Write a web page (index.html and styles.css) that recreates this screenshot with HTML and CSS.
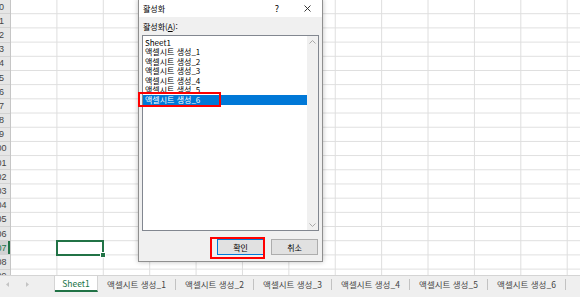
FILE: index.html
```html
<!DOCTYPE html>
<html lang="ko">
<head>
  <meta charset="UTF-8" />
  <title>활성화</title>
  <link rel="stylesheet" href="styles.css">
</head>
<body>

<div class="excel">
  <div class="sheet">
    <div class="rowhead">
      <div class="rh"><span>90</span></div>
      <div class="rh"><span>91</span></div>
      <div class="rh"><span>92</span></div>
      <div class="rh"><span>93</span></div>
      <div class="rh"><span>94</span></div>
      <div class="rh"><span>95</span></div>
      <div class="rh"><span>96</span></div>
      <div class="rh"><span>97</span></div>
      <div class="rh"><span>98</span></div>
      <div class="rh"><span>99</span></div>
      <div class="rh"><span>100</span></div>
      <div class="rh"><span>101</span></div>
      <div class="rh"><span>102</span></div>
      <div class="rh"><span>103</span></div>
      <div class="rh"><span>104</span></div>
      <div class="rh"><span>105</span></div>
      <div class="rh"><span>106</span></div>
      <div class="rh current"><span>107</span></div>
      <div class="rh"><span>108</span></div>
      <div class="rh"><span>109</span></div>
    </div>
    <div class="cells">
      <div class="active-cell"></div>
    </div>
  </div>

  <div class="tabbar">
    <div class="nav">
      <svg width="3" height="5" viewBox="0 0 3 5"><path d="M3 0 L0 2.5 L3 5 Z" fill="#c4c4c4"/></svg>
      <svg width="3" height="5" viewBox="0 0 3 5"><path d="M0 0 L3 2.5 L0 5 Z" fill="#c4c4c4"/></svg>
    </div>
    <div class="tab active">Sheet1</div>
    <div class="tab">액셀시트 생성_1</div>
    <div class="tab">액셀시트 생성_2</div>
    <div class="tab">액셀시트 생성_3</div>
    <div class="tab">액셀시트 생성_4</div>
    <div class="tab">액셀시트 생성_5</div>
    <div class="tab">액셀시트 생성_6</div>
  </div>
</div>

<div class="dialog">
  <div class="titlebar">
    <span class="title">활성화</span>
    <span class="tbtn">?</span>
    <span class="tbtn">
      <svg width="7" height="7" viewBox="0 0 7 7"><path d="M0.5 0.5 L6.5 6.5 M6.5 0.5 L0.5 6.5" stroke="#222" stroke-width="0.9" fill="none"/></svg>
    </span>
  </div>
  <div class="dlg-body">
    <div class="label">활성화(<u>A</u>):</div>
    <div class="listbox">
      <div class="items">
        <div class="item">Sheet1</div>
        <div class="item">액셀시트 생성_1</div>
        <div class="item">액셀시트 생성_2</div>
        <div class="item">액셀시트 생성_3</div>
        <div class="item">액셀시트 생성_4</div>
        <div class="item">액셀시트 생성_5</div>
        <div class="item selected">액셀시트 생성_6</div>
      </div>
      <div class="scrollbar">
        <svg width="7" height="4" viewBox="0 0 7 4"><path d="M0.5 3.5 L3.5 0.5 L6.5 3.5" stroke="#a8a8a8" fill="none"/></svg>
        <svg width="7" height="4" viewBox="0 0 7 4"><path d="M0.5 0.5 L3.5 3.5 L6.5 0.5" stroke="#a8a8a8" fill="none"/></svg>
      </div>
    </div>
    <div class="buttons">
      <button class="btn default">확인</button>
      <button class="btn">취소</button>
    </div>
  </div>
</div>

<div class="mark mark-list"></div>
<div class="mark mark-ok"></div>

</body>
</html>
```

FILE: styles.css
```css
body {
  margin: 0;
  width: 580px;
  height: 297px;
  overflow: hidden;
  position: relative;
  background: #fff;
  font-family: "Noto Sans CJK KR", "Noto Sans", sans-serif;
}

/* spreadsheet */
.excel {
  display: flex;
  flex-direction: column;
  height: 297px;
}
.sheet {
  display: flex;
  height: 275px;
  overflow: hidden;
}
.rowhead {
  width: 11px;
  flex: none;
  background: #e6e6e6;
  border-right: 1px solid #c6c6c6;
  box-sizing: border-box;
}
.rh {
  height: 14.2px;
  box-sizing: border-box;
  border-bottom: 1px solid #d2d2d2;
  display: flex;
  align-items: center;
  overflow: hidden;
  font-family: "Liberation Sans", sans-serif;
  font-size: 9px;
  color: #444;
}
.rh span {
  flex: none;
  width: 28px;
  margin-left: -15px;
  text-align: center;
}
.rh.current {
  background: #d2d2d2;
  color: #217346;
  box-shadow: inset -2px 0 #217346;
}
.cells {
  flex: 1;
  display: grid;
  grid-template-columns: repeat(12, 46.4px);
  grid-template-rows: repeat(20, 14.2px);
  background-image:
    linear-gradient(to right, transparent 45.4px, #dedede 45.4px),
    linear-gradient(to bottom, transparent 13.2px, #dedede 13.2px);
  background-size: 46.4px 100%, 100% 14.2px;
}
.active-cell {
  grid-row: 18;
  grid-column: 2;
  margin: -1px 0 -1px -1px;
  border: 2px solid #217346;
  position: relative;
}
.active-cell::after {
  content: "";
  position: absolute;
  right: -4px;
  bottom: -4px;
  width: 4px;
  height: 4px;
  background: #217346;
  border: 1px solid #fff;
}

/* sheet tabs */
.tabbar {
  height: 22px;
  box-sizing: border-box;
  border-top: 1px solid #d4d4d4;
  background: #efefef;
  display: flex;
  align-items: flex-start;
  font-size: 8.5px;
  color: #444;
}
.nav {
  width: 55px;
  height: 16px;
  display: flex;
  align-items: center;
  gap: 17px;
  padding-left: 6px;
  box-sizing: border-box;
}
.tab {
  width: 78px;
  height: 11px;
  margin-top: 3px;
  line-height: 11px;
  text-align: center;
  border-right: 1px solid #c2c2c2;
  box-sizing: border-box;
  white-space: nowrap;
}
.tab.active {
  width: 43px;
  height: 16px;
  margin-top: 0;
  line-height: 15px;
  background: #fff;
  color: #217346;
  border-right: 1px solid #d4d4d4;
  border-bottom: 2px solid #217346;
  box-shadow: -1px 0 #d4d4d4;
}

/* dialog */
.dialog {
  position: absolute;
  left: 138px;
  top: -1px;
  width: 185px;
  box-sizing: border-box;
  border: 1px solid #8f8f8f;
  background: #f0f0f0;
  box-shadow: 0 0 5px rgba(0, 0, 0, 0.25);
  font-size: 8px;
  color: #000;
}
.titlebar {
  height: 17px;
  background: #fff;
  display: flex;
  align-items: center;
  padding-left: 4px;
}
.title {
  flex: 1;
}
.tbtn {
  width: 30px;
  height: 17px;
  display: flex;
  align-items: center;
  justify-content: center;
  font-size: 9px;
}
.dlg-body {
  padding: 4px 3px 6px 3px;
}
.label {
  height: 12px;
  line-height: 12px;
  padding-left: 1px;
}
.listbox {
  margin-top: 2px;
  height: 196px;
  box-sizing: border-box;
  border: 1px solid #828790;
  background: #fff;
  display: flex;
}
.items {
  flex: 1;
  padding-top: 1.5px;
}
.item {
  height: 9.6px;
  line-height: 9.6px;
  padding-left: 2px;
  white-space: nowrap;
}
.item.selected {
  background: #0078d7;
  color: #fff;
}
.scrollbar {
  width: 11px;
  background: #f0f0f0;
  display: flex;
  flex-direction: column;
  align-items: center;
  justify-content: space-between;
  padding: 4px 0 3px;
  box-sizing: border-box;
}
.buttons {
  margin-top: 8px;
  display: flex;
  justify-content: flex-end;
  gap: 7px;
  padding-right: 1px;
}
.btn {
  width: 47px;
  height: 16px;
  padding: 0;
  box-sizing: border-box;
  border: 1px solid #adadad;
  background: #e1e1e1;
  font-family: inherit;
  font-size: 8px;
  color: #000;
}
.btn.default {
  border-color: #0078d7;
}

/* red annotation boxes */
.mark {
  position: absolute;
  box-sizing: border-box;
  border: 2px solid #f00;
}
.mark-list {
  left: 138px;
  top: 92px;
  width: 83px;
  height: 15px;
}
.mark-ok {
  left: 210px;
  top: 237px;
  width: 55px;
  height: 22px;
}
```
